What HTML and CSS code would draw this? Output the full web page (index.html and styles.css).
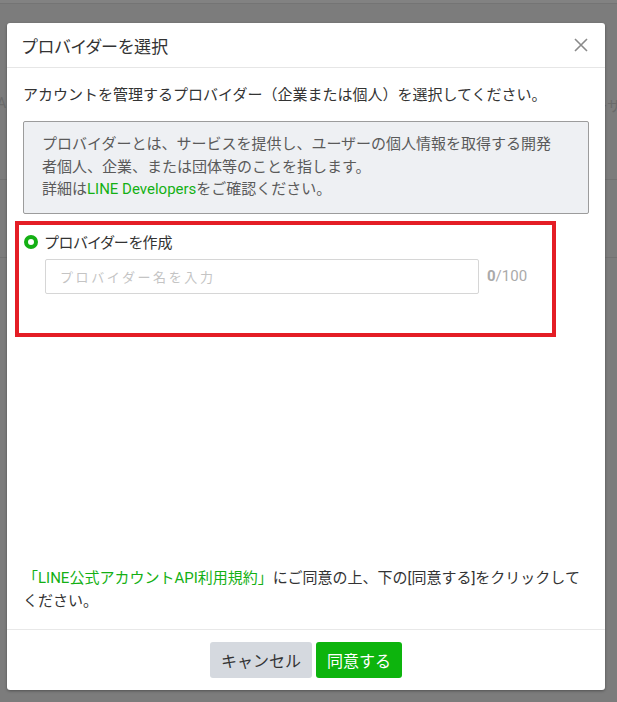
FILE: index.html
```html
<!DOCTYPE html>
<html lang="ja">
<head>
<meta charset="utf-8">
<title>プロバイダーを選択</title>
<link rel="stylesheet" href="styles.css">
</head>
<body>
<div class="backdrop">
  <div class="bd-top"></div>
  <div class="bd-row bd-row-text"><span>A</span><span>ーサ</span></div>
  <div class="bd-line bd-line-1"></div>
  <div class="bd-line bd-line-2"></div>
</div>

<div class="modal">
  <div class="modal-header">
    <h1 class="modal-title">プロバイダーを選択</h1>
    <button class="close-btn" aria-label="閉じる">
      <svg width="14" height="14" viewBox="0 0 14 14"><path d="M1 1 L13 13 M13 1 L1 13" stroke="#8a8a8a" stroke-width="1.6" fill="none"/></svg>
    </button>
  </div>
  <div class="modal-body">
    <p class="intro">アカウントを管理するプロバイダー（企業または個人）を選択してください。</p>
    <div class="info-box">
      <p>プロバイダーとは、サービスを提供し、ユーザーの個人情報を取得する開発者個人、企業、または団体等のことを指します。</p>
      <p>詳細は<a class="link" href="#">LINE Developers</a>をご確認ください。</p>
    </div>
    <div class="create-section">
      <label class="radio-row">
        <span class="radio"></span>
        <span class="radio-label">プロバイダーを作成</span>
      </label>
      <div class="input-row">
        <input class="text-input" type="text" placeholder="プロバイダー名を入力">
        <span class="counter"><b>0</b>/100</span>
      </div>
    </div>
    <div class="spacer"></div>
    <p class="terms"><span class="link">「LINE公式アカウントAPI利用規約」</span>にご同意の上、下の[同意する]をクリックしてください。</p>
  </div>
  <div class="modal-footer">
    <button class="btn btn-cancel">キャンセル</button>
    <button class="btn btn-agree">同意する</button>
  </div>
  <div class="highlight"></div>
</div>
</body>
</html>
```

FILE: styles.css
```css
* { box-sizing: border-box; }

html, body {
  margin: 0;
  padding: 0;
}

body {
  width: 617px;
  height: 702px;
  overflow: hidden;
  background: #7c7c7c;
  font-family: "Roboto", "Noto Sans CJK JP", sans-serif;
  color: #333;
  position: relative;
}

.backdrop {
  position: absolute;
  inset: 0;
}

.bd-top {
  height: 4px;
  background: #828282;
  border-bottom: 1px solid #747474;
}

.bd-row-text {
  position: absolute;
  top: 95px;
  left: -3px;
  right: -4px;
  display: flex;
  justify-content: space-between;
  font-size: 14px;
  color: #6a6a6a;
}

.bd-line {
  position: absolute;
  left: 0;
  right: 0;
  height: 1px;
  background: #727272;
}
.bd-line-1 { top: 179px; }
.bd-line-2 { top: 257px; }

.modal {
  position: relative;
  margin: 23px 0 0 7px;
  width: 598px;
  height: 667px;
  background: #fff;
  border-radius: 3px;
  box-shadow: 0 1px 3px rgba(0, 0, 0, 0.35);
  display: flex;
  flex-direction: column;
}

.modal-header {
  height: 45px;
  border-bottom: 1px solid #e6e6e6;
  display: flex;
  align-items: center;
  justify-content: space-between;
  padding: 0 17px 0 15px;
}

.modal-title {
  margin: 0;
  font-size: 17px;
  font-weight: normal;
  color: #333;
  font-feature-settings: "palt";
  letter-spacing: 0.2px;
}

.close-btn {
  border: 0;
  background: none;
  padding: 0;
  width: 14px;
  height: 14px;
  display: flex;
}

.modal-body {
  flex: 1;
  display: flex;
  flex-direction: column;
  padding: 16px 16px 16px 16px;
}

.intro {
  margin: 0;
  font-size: 15px;
  line-height: 22px;
  color: #333;
}

.info-box {
  margin-top: 15px;
  background: #eef0f3;
  border: 1px solid #9c9c9c;
  border-radius: 2px;
  padding: 11px 30px 12px 18px;
  font-size: 15px;
  line-height: 22.5px;
  color: #5a5a5a;
}

.info-box p { margin: 0; }

.link {
  color: #14b014;
  text-decoration: none;
}

.create-section {
  margin-top: 17px;
}

.radio-row {
  display: flex;
  align-items: center;
  gap: 7px;
  height: 22px;
}

.radio {
  width: 14px;
  height: 14px;
  border-radius: 50%;
  border: 4.5px solid #14b014;
  background: #fff;
  margin-left: 1px;
}

.radio-label {
  font-size: 15px;
  color: #333;
  font-feature-settings: "palt";
}

.input-row {
  margin-top: 6px;
  display: flex;
  align-items: center;
  gap: 8px;
  padding-left: 22px;
}

.text-input {
  width: 434px;
  height: 35px;
  border: 1px solid #d6d6d6;
  border-radius: 2px;
  padding: 0 14px;
  font-family: "Noto Sans CJK JP", sans-serif;
  font-size: 13px;
  letter-spacing: 2.6px;
  color: #333;
  outline: none;
}

.text-input::placeholder {
  color: #c4c4c4;
}

.counter {
  font-size: 15px;
  color: #aaa;
}

.counter b {
  font-weight: 700;
}

.spacer { flex: 1; }

.terms {
  margin: 0;
  font-size: 15px;
  line-height: 23px;
  color: #333;
}

.modal-footer {
  border-top: 1px solid #e8e8e8;
  padding: 12px 0;
  display: flex;
  justify-content: center;
  gap: 4px;
}

.btn {
  height: 36px;
  border: 0;
  border-radius: 3px;
  padding: 0 11px;
  font-family: "Roboto", "Noto Sans CJK JP", sans-serif;
  font-size: 16px;
  cursor: pointer;
}

.btn-cancel {
  background: #d5d9df;
  color: #333;
}

.btn-agree {
  background: #0db40d;
  color: #fff;
}

.highlight {
  position: absolute;
  left: 8px;
  top: 198px;
  width: 541px;
  height: 116px;
  border: 4px solid #e41d25;
  pointer-events: none;
}
```
